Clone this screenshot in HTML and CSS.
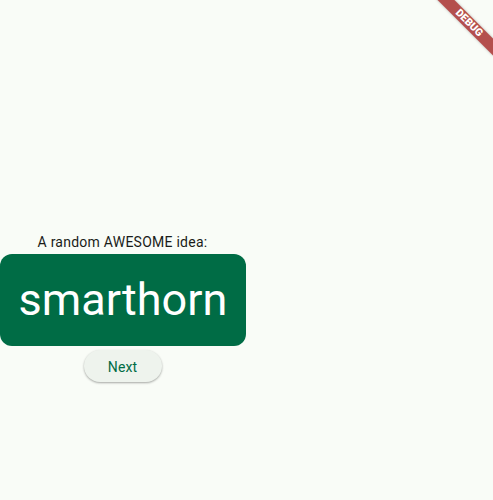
FILE: index.html
```html
<!DOCTYPE html>
<html>
<head>
<meta charset="utf-8">
<link rel="stylesheet" href="styles.css">
</head>
<body>
<div class="app">
  <main class="pane">
    <p class="label">A random AWESOME idea:</p>
    <div class="card"><span class="word">smarthorn</span></div>
    <div class="actions">
      <button class="btn">Next</button>
    </div>
  </main>
</div>
<div class="banner">DEBUG</div>
</body>
</html>
```
FILE: styles.css
```css
html, body {
  margin: 0;
  padding: 0;
  width: 493px;
  height: 500px;
  overflow: hidden;
  background: #f9fcf7;
  font-family: Roboto, "Noto Sans", sans-serif;
}
.app {
  display: flex;
  height: 500px;
}
.pane {
  width: 245px;
  display: flex;
  flex-direction: column;
  align-items: center;
  padding-top: 231px;
}
.label {
  margin: 0;
  font-size: 14px;
  line-height: 23px;
  color: #1a1c19;
  letter-spacing: 0.25px;
}
.card {
  align-self: flex-start;
  width: 246px;
  box-sizing: border-box;
  background: #006c45;
  border-radius: 12px;
  padding: 20px 0;
  display: flex;
  justify-content: center;
}
.word {
  font-size: 45px;
  line-height: 52px;
  color: #ffffff;
}
.actions {
  display: flex;
  justify-content: center;
  margin-top: 4px;
}
.btn {
  height: 32px;
  width: 78px;
  border: none;
  border-radius: 16px;
  background: #eef3ed;
  color: #006c45;
  font-family: Roboto, "Noto Sans", sans-serif;
  font-size: 14px;
  font-weight: 400;
  letter-spacing: 0.1px;
  box-shadow: 0 1px 2px rgba(0,0,0,0.25), 0 1px 3px rgba(0,0,0,0.1);
  padding: 1px 0 0;
}
.banner {
  position: absolute;
  left: 429px;
  top: 17px;
  width: 80px;
  height: 12px;
  transform: rotate(45deg);
  background: rgba(160, 30, 30, 0.78);
  color: #fff;
  font-family: Roboto, "Noto Sans", sans-serif;
  font-weight: 900;
  font-size: 10.5px;
  line-height: 12px;
  text-align: center;
  box-shadow: 0 0 3px rgba(0,0,0,0.25);
}
```
